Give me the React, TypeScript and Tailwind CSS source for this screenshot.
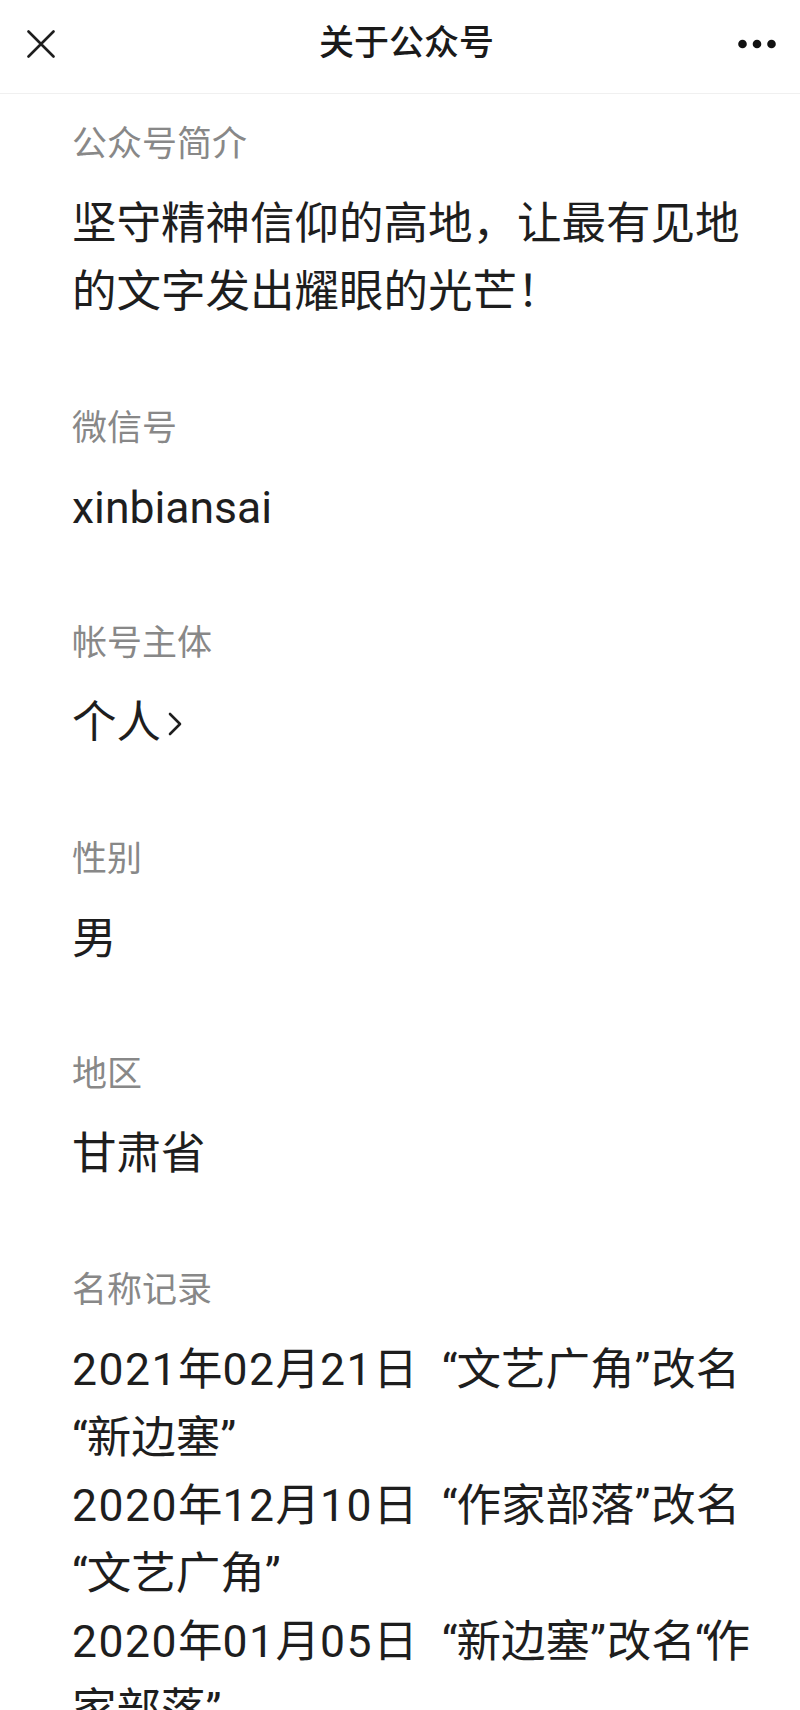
import React from "react";

const FONT = "font-['Roboto','Noto_Sans_CJK_SC',sans-serif]";

function Label({ children }: { children: React.ReactNode }) {
  return <div className="text-[35px] leading-[50px] text-[#888888]">{children}</div>;
}

function Value({ children }: { children: React.ReactNode }) {
  return <div className="mt-[20px] text-[44.5px] leading-[68px] text-[#1e1e1e]">{children}</div>;
}

function Section({ label, children, first }: { label: string; children: React.ReactNode; first?: boolean }) {
  return (
    <section className={first ? "" : "mt-[77.5px]"}>
      <Label>{label}</Label>
      <Value>{children}</Value>
    </section>
  );
}

function N({ children }: { children: React.ReactNode }) {
  return <span className="tracking-[1.5px]">{children}</span>;
}

function L() {
  return <span className="tracking-[-1px]">“</span>;
}

function R() {
  return <span className="tracking-[1px]">”</span>;
}

function Line({ children }: { children: React.ReactNode }) {
  return <div className="whitespace-nowrap [word-spacing:13px]">{children}</div>;
}

export default function App() {
  return (
    <div lang="zh-CN" className={`${FONT} w-[800px] h-[1710px] overflow-hidden bg-white`}>
      <header className="h-[94px] pb-[6px] border-b border-[#f0f0f0] flex items-center justify-between px-[27px]">
        <svg width="28" height="28" viewBox="0 0 28 28" className="shrink-0">
          <path d="M1.5 1.5 L26.5 26.5 M26.5 1.5 L1.5 26.5" stroke="#1e1e1e" strokeWidth="2.6" strokeLinecap="round" />
        </svg>
        <h1 className="text-[35px] leading-[50px] font-medium text-[#1a1a1a] ml-[20px]">关于公众号</h1>
        <svg width="38" height="10" viewBox="0 0 38 10" className="shrink-0 mr-[-3px]">
          <circle cx="4.5" cy="5" r="4.3" fill="#111" />
          <circle cx="19" cy="5" r="4.3" fill="#111" />
          <circle cx="33.5" cy="5" r="4.3" fill="#111" />
        </svg>
      </header>

      <main className="pl-[72px] pr-[40px] pt-[26px]">
        <Section label="公众号简介" first>
          坚守精神信仰的高地，让最有见地
          <br />
          的文字发出耀眼的光芒！
        </Section>

        <Section label="微信号">xinbiansai</Section>

        <Section label="帐号主体">
          <span className="inline-flex items-center">
            个人
            <svg width="16" height="26" viewBox="0 0 16 26" className="ml-[6px] mt-[2px]">
              <path d="M3 3 L13 13 L3 23" fill="none" stroke="#1e1e1e" strokeWidth="2.6" strokeLinecap="round" strokeLinejoin="round" />
            </svg>
          </span>
        </Section>

        <Section label="性别">男</Section>

        <Section label="地区">甘肃省</Section>

        <Section label="名称记录">
          <Line>
            <N>2021</N>年<N>02</N>月<N>21</N>日 <L />文艺广角<R />改名
          </Line>
          <Line>
            <L />新边塞<R />
          </Line>
          <Line>
            <N>2020</N>年<N>12</N>月<N>10</N>日 <L />作家部落<R />改名
          </Line>
          <Line>
            <L />文艺广角<R />
          </Line>
          <Line>
            <N>2020</N>年<N>01</N>月<N>05</N>日 <L />新边塞<R />改名<span className="-ml-[1px] tracking-[-5px]">“</span>作
          </Line>
          <Line>
            家部落<R />
          </Line>
        </Section>
      </main>
    </div>
  );
}
